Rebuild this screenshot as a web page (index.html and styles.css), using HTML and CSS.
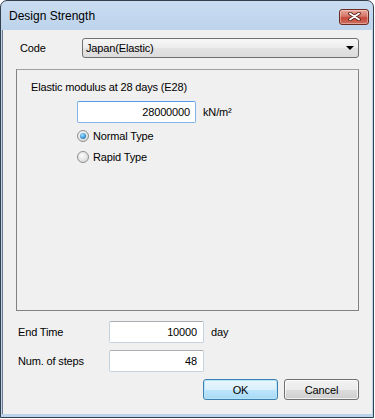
FILE: index.html
```html
<!DOCTYPE html>
<html lang="en">
<head>
    <meta charset="UTF-8">
    <title>Design Strength</title>
    <link rel="stylesheet" href="styles.css">
</head>
<body>
    <div class="window">
        <div class="titlebar">
            <span class="title">Design Strength</span>
            <button type="button" class="close-btn" aria-label="Close">
                <svg width="13" height="9" viewBox="0 0 13 9">
                    <path d="M2 1.5 L11 7.5 M11 1.5 L2 7.5" stroke="#5a2019" stroke-width="3.6" stroke-linecap="round"/>
                    <path d="M2 1.5 L11 7.5 M11 1.5 L2 7.5" stroke="#fff" stroke-width="1.8" stroke-linecap="round"/>
                </svg>
            </button>
        </div>
        <div class="client">
            <div class="code-row">
                <span class="code-label">Code</span>
                <div class="combo">
                    <span>Japan(Elastic)</span>
                    <span class="combo-arrow"></span>
                </div>
            </div>
            <div class="group">
                <div class="group-title">Elastic modulus at 28 days (E28)</div>
                <div class="modulus-row">
                    <input type="text" class="textbox modulus-box" value="28000000">
                    <span class="unit">kN/m²</span>
                </div>
                <div class="radio-row">
                    <span class="radio checked"></span>
                    <span>Normal Type</span>
                </div>
                <div class="radio-row">
                    <span class="radio"></span>
                    <span>Rapid Type</span>
                </div>
            </div>
            <div class="field-row first">
                <span class="field-label">End Time</span>
                <input type="text" class="textbox field-box" value="10000">
                <span class="unit">day</span>
            </div>
            <div class="field-row">
                <span class="field-label">Num. of steps</span>
                <input type="text" class="textbox field-box" value="48">
            </div>
            <div class="button-row">
                <button type="button" class="btn btn-default">OK</button>
                <button type="button" class="btn">Cancel</button>
            </div>
        </div>
    </div>
</body>
</html>
```
FILE: styles.css
```css
body {
    margin: 0;
    background: #fff;
    font-family: "Liberation Sans", Arial, sans-serif;
    font-size: 11px;
    letter-spacing: -0.15px;
    color: #000;
}
.window {
    width: 374px;
    height: 418px;
    box-sizing: border-box;
    border: 1px solid #34404e;
    border-radius: 7px 7px 0 0;
    background: linear-gradient(180deg, #c9dcf1 0%, #b9d1ea 40px, #bcd3ec 100%);
    display: flex;
    flex-direction: column;
}
.titlebar {
    height: 29px;
    display: flex;
    align-items: center;
    justify-content: space-between;
    padding: 0 4px 0 8px;
    flex-shrink: 0;
}
.title {
    font-size: 12px;
    letter-spacing: 0;
    color: #000;
}
.close-btn {
    width: 30px;
    height: 16px;
    margin-top: 2px;
    padding: 0;
    border: 1px solid #6b2a22;
    border-radius: 3px;
    background: linear-gradient(180deg, #e8a89c 0%, #d57667 45%, #c44a3b 55%, #d0705f 100%);
    box-shadow: inset 0 0 0 1px rgba(255,255,255,0.35);
    display: flex;
    align-items: center;
    justify-content: center;
}
.client {
    flex: 1;
    margin: 0 1px 3px 1px;
    border-left: 1px solid #6c7c8e;
    background: #f0f0f0;
    padding: 8px 0 0 13px;
}
.code-row {
    display: flex;
    align-items: center;
    height: 20px;
    padding-left: 4px;
}
.code-label {
    width: 62px;
}
.combo {
    width: 277px;
    height: 20px;
    box-sizing: border-box;
    border: 1px solid #707070;
    border-radius: 3px;
    background: linear-gradient(180deg, #f7f7f7 0%, #ececec 50%, #e3e3e3 51%, #dcdcdc 100%);
    display: flex;
    align-items: center;
    justify-content: space-between;
    padding: 0 4px 0 3px;
}
.combo-arrow {
    width: 0;
    height: 0;
    border-left: 4px solid transparent;
    border-right: 4px solid transparent;
    border-top: 4px solid #000;
}
.group {
    margin-top: 11px;
    width: 343px;
    height: 242px;
    box-sizing: border-box;
    border: 1px solid #828282;
    border-top-color: #a0a0a0;
    padding: 10px 0 0 14px;
}
.group-title {
    height: 14px;
    line-height: 14px;
}
.modulus-row {
    display: flex;
    align-items: center;
    margin: 7px 0 0 46px;
}
.textbox {
    height: 22px;
    box-sizing: border-box;
    border: 1px solid #c5d2df;
    border-top-color: #abadb3;
    border-radius: 2px;
    background: #fff;
    font-family: "Liberation Sans", Arial, sans-serif;
    font-size: 11px;
    letter-spacing: -0.15px;
    color: #000;
    text-align: right;
    padding: 0 5px 0 2px;
    outline: none;
    margin: 0;
}
.modulus-box {
    width: 119px;
    border-color: #7eb4ea;
    border-top-color: #569de5;
}
.unit {
    margin-left: 7px;
}
.radio-row {
    display: flex;
    align-items: center;
    height: 14px;
    margin: 6px 0 0 46px;
}
.radio-row + .radio-row {
    margin-top: 7px;
}
.radio {
    width: 12px;
    height: 12px;
    box-sizing: border-box;
    border: 1px solid #8e8f8f;
    border-radius: 50%;
    background: radial-gradient(circle at 40% 35%, #fbfbfb 0%, #e6e6e6 50%, #cfcfcf 100%);
    margin-right: 4px;
    display: flex;
    align-items: center;
    justify-content: center;
}
.radio.checked::after {
    content: "";
    width: 6px;
    height: 6px;
    border-radius: 50%;
    background: radial-gradient(circle at 40% 35%, #a9e4ff 0%, #3a95d8 55%, #1b5a92 100%);
}
.field-row {
    display: flex;
    align-items: center;
    height: 22px;
    margin-top: 7px;
    padding-left: 2px;
}
.field-row.first {
    margin-top: 10px;
}
.field-label {
    width: 91px;
}
.field-box {
    width: 95px;
    padding-right: 6px;
}
.button-row {
    width: 343px;
    display: flex;
    justify-content: flex-end;
    gap: 6px;
    margin-top: 7px;
}
.btn {
    width: 75px;
    height: 21px;
    box-sizing: border-box;
    border: 1px solid #707070;
    border-radius: 3px;
    background: linear-gradient(180deg, #f2f2f2 0%, #ebebeb 50%, #dddddd 51%, #cfcfcf 100%);
    box-shadow: inset 0 0 0 1px rgba(255,255,255,0.7);
    font-family: "Liberation Sans", Arial, sans-serif;
    font-size: 11px;
    letter-spacing: -0.15px;
    color: #000;
    padding: 0;
}
.btn-default {
    border-color: #3c7fb1;
    background: linear-gradient(180deg, #eaf6fd 0%, #d9f0fc 50%, #bee6fd 51%, #a7d9f5 100%);
    box-shadow: inset 0 0 0 1px #b7e6fb;
}
```
